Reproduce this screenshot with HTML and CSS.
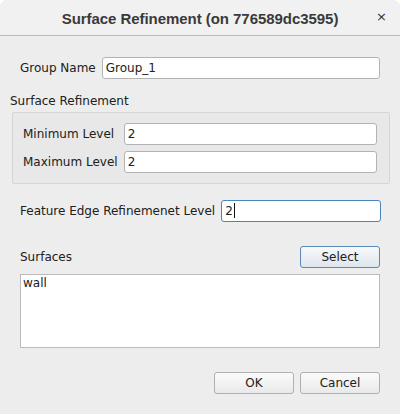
FILE: index.html
```html
<!DOCTYPE html>
<html>
<head>
<meta charset="utf-8">
<link rel="stylesheet" href="styles.css">
</head>
<body>
<div class="window">
  <div class="titlebar">
    <div class="title">Surface Refinement (on 776589dc3595)</div>
    <div class="close">×</div>
  </div>
  <div class="content">
    <div class="row row-name">
      <span class="label">Group Name</span>
      <div class="field">Group_1</div>
    </div>
    <div class="section-label">Surface Refinement</div>
    <div class="groupbox">
      <span class="label">Minimum Level</span>
      <div class="field">2</div>
      <span class="label">Maximum Level</span>
      <div class="field">2</div>
    </div>
    <div class="row row-feature">
      <span class="label">Feature Edge Refinemenet Level</span>
      <div class="field focused">2<span class="caret"></span></div>
    </div>
    <div class="row row-surfaces">
      <span class="label">Surfaces</span>
      <div class="button default">Select</div>
    </div>
    <div class="list">
      <div class="item">wall</div>
    </div>
    <div class="actions">
      <div class="button">OK</div>
      <div class="button">Cancel</div>
    </div>
  </div>
</div>
</body>
</html>
```

FILE: styles.css
```css
html, body {
  margin: 0;
  padding: 0;
  background: #ffffff;
}
body {
  width: 400px;
  height: 414px;
  overflow: hidden;
  font-family: "DejaVu Sans", sans-serif;
  font-size: 12px;
  color: #202020;
}
.window {
  width: 400px;
  height: 414px;
  background: #ededed;
  border-radius: 7px 7px 0 0;
  overflow: hidden;
  display: flex;
  flex-direction: column;
}
.titlebar {
  height: 35px;
  flex: none;
  background: #f1f1f1;
  border-bottom: 1px solid #b9b9b6;
  display: flex;
  align-items: center;
  justify-content: center;
  position: relative;
}
.title {
  font-family: "Liberation Sans", sans-serif;
  font-weight: bold;
  font-size: 15px;
  color: #3a3a3a;
  margin-top: 1px;
  letter-spacing: -0.05px;
}
.close {
  position: absolute;
  right: 13px;
  top: 9px;
  font-size: 13px;
  color: #333;
  font-family: "DejaVu Sans", sans-serif;
}
.content {
  display: flex;
  flex-direction: column;
  padding: 0 20px 0 20px;
}
.row {
  display: flex;
  align-items: center;
  gap: 6px;
}
.label {
  white-space: nowrap;
}
.row-name {
  margin-top: 21px;
}
.row .field {
  flex: 1;
}
.field {
  height: 20px;
  line-height: 20px;
  background: #ffffff;
  border: 1px solid #b3b3b3;
  border-radius: 3px;
  padding-left: 3px;
  box-sizing: content-box;
  white-space: nowrap;
}
.field.focused {
  border-color: #4a86bd;
}
.caret {
  display: inline-block;
  width: 1px;
  height: 15px;
  background: #111;
  vertical-align: -3px;
  margin-left: 1px;
}
.section-label {
  margin: 15px 0 0 -10px;
  line-height: 15px;
}
.groupbox {
  margin: 3px -10px 0 -8px;
  background: #e8e8e8;
  border: 1px solid #d5d5d5;
  border-radius: 2px;
  padding: 10px 12px 10px 10px;
  display: grid;
  grid-template-columns: auto 1fr;
  column-gap: 6px;
  row-gap: 6px;
  align-items: center;
}
.row-feature {
  margin-top: 16px;
}
.row-feature .field {
  flex: none;
  width: 155px;
}
.row-surfaces {
  margin-top: 24px;
  justify-content: space-between;
}
.button {
  width: 78px;
  height: 20px;
  line-height: 20px;
  text-align: center;
  border: 1px solid #b0b0b0;
  border-radius: 3px;
  background: linear-gradient(#fbfbfb, #e9e9e9);
  color: #202020;
}
.button.default {
  border-color: #5b88b5;
  background: linear-gradient(#f7f9fb, #dfe5ec);
}
.list {
  margin-top: 6px;
  height: 72px;
  background: #ffffff;
  border: 1px solid #bcbcbc;
}
.item {
  padding-left: 2px;
  line-height: 16px;
}
.actions {
  margin-top: 24px;
  display: flex;
  justify-content: flex-end;
  gap: 6px;
}
```
